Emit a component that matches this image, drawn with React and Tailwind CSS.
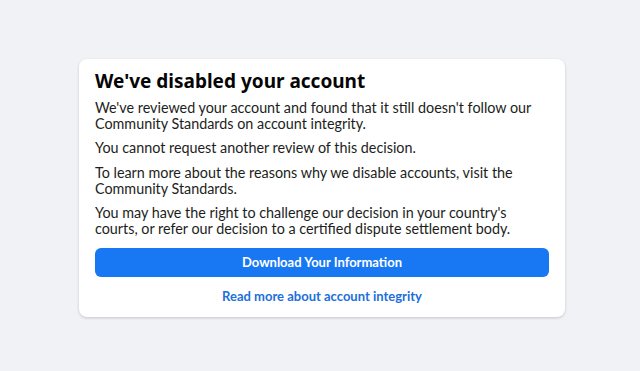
export default function App() {
  return (
    <div className="min-h-[371px] w-full bg-[#f0f2f5] pt-[59px]" style={{ fontFamily: 'Lato, "Noto Sans", sans-serif' }}>
      <div className="ml-[79px] w-[486px] rounded-lg bg-white px-4 pt-[10px] pb-[11px] shadow-[0_1px_3px_rgba(0,0,0,0.18)]">
        <h1 className="text-[19px] font-bold leading-[24px] text-[#050505]" style={{ fontFamily: '"Noto Sans", "Open Sans", sans-serif' }}>We've disabled your account</h1>
        <div className="mt-[7px] text-[14.35px] leading-[16px] text-[#1c1e21]">
          <p>We've reviewed your account and found that it still doesn't follow our Community Standards on account integrity.</p>
          <p className="mt-[8px]">You cannot request another review of this decision.</p>
          <p className="mt-[9px]">To learn more about the reasons why we disable accounts, visit the Community Standards.</p>
          <p className="mt-[8px]">You may have the right to challenge our decision in your country's courts, or refer our decision to a certified dispute settlement body.</p>
        </div>
        <button className="mt-[11px] flex h-[29px] w-full items-center justify-center rounded-md bg-[#1877f2] text-[13px] font-bold text-white">
          Download Your Information
        </button>
        <div className="mt-[9px] text-center text-[13px] font-bold leading-[20px] text-[#216fdb]">Read more about account integrity</div>
      </div>
    </div>
  );
}
